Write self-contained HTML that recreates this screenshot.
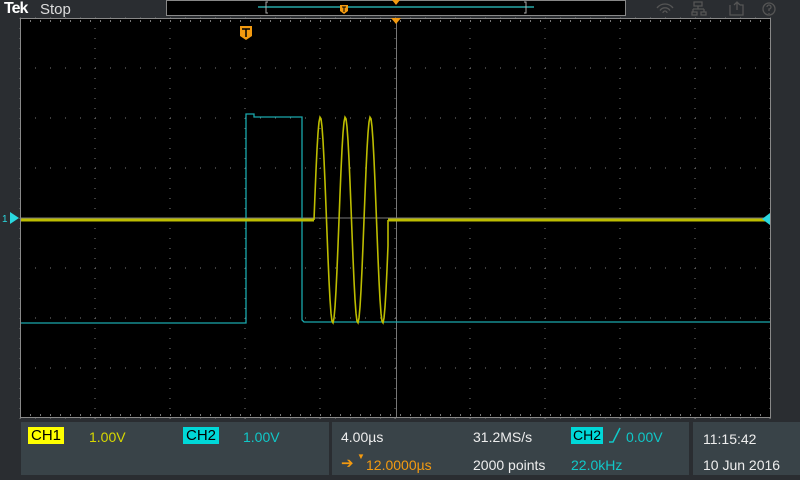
<!DOCTYPE html>
<html><head><meta charset="utf-8"><style>
body{margin:0;width:800px;height:480px;background:#2a2d31;overflow:hidden;font-family:"Liberation Sans",sans-serif;position:relative}
.t{position:absolute;white-space:nowrap;font-size:14px}
.p{position:absolute;background:#394348}
</style></head><body>
<div class="t" style="left:4px;top:0px;color:#fff;font-weight:bold;font-size:16px;letter-spacing:-1px">Tek</div>
<div class="t" style="left:40px;top:1px;color:#ddd;font-size:15px">Stop</div>
<svg width="800" height="480" style="position:absolute;left:0;top:0" id="s">
<rect x="166.5" y="0.5" width="459" height="15" fill="#000" stroke="#888"/>
<line x1="258" y1="7" x2="534" y2="7" stroke="#2cc8c8" stroke-width="1.2"/>
<path d="M268 2h-2v11h2M524 2h2v11h-2" fill="none" stroke="#aaa"/>
<path d="M340 5h8v6l-4 3l-4-3z" fill="#f39a10"/><path d="M342 7h4M344 7v5" stroke="#000"/>
<path d="M392 0h8l-4 5z" fill="#f39a10"/>
<rect x="20" y="18" width="751" height="400" fill="#000"/>
<g id="g"></g>
<line x1="396.5" y1="18" x2="396.5" y2="418" stroke="#777"/>
<line x1="20" y1="218" x2="771" y2="218" stroke="#777"/>
<path id="c2" fill="none" stroke="#19a8ac" stroke-width="1.3" d="M20 323H246V114H254V117H302V320L304 322H771"/>
<path id="c1" fill="none" stroke="#bdbd00" stroke-width="1.6"/>
<line x1="20" y1="220" x2="314" y2="220" stroke="#bdbd00" stroke-width="3"/>
<line x1="388" y1="220" x2="771" y2="220" stroke="#bdbd00" stroke-width="3"/>
<rect x="20.5" y="18.5" width="750" height="399" fill="none" stroke="#888"/>
<path d="M240 26h12v10l-6 4l-6-4z" fill="#f39a10"/><path d="M242 29h8M246 29v8" stroke="#000" stroke-width="1.5"/>
<path d="M391 18h10l-5 6z" fill="#f39a10"/>
<path d="M10 212l9 6l-9 6z" fill="#2ad8e0"/><text x="2" y="222" font-size="10" fill="#2ad8e0" font-family="Liberation Sans">1</text>
<path d="M770 213l-8 6l8 6z" fill="#2ad8e0"/>
<g fill="none" stroke="#555" stroke-width="1.3">
<path d="M657 8a10 10 0 0 1 16 0M660 10.5a6 6 0 0 1 10 0M663 13a2 2 0 0 1 4 0"/>
<path d="M694 2h8v4h-8zM698 6v3M693 9h11M693 9v3M704 9v3M692 12h5v3h-5zM701 12h5v3h-5z"/>
<path d="M730 5v10h13v-10h-3M737 10v-8M734 5l3-3l3 3"/>
<circle cx="769" cy="9" r="6"/><path d="M767 7a2 2 0 1 1 2 2v2M769 13v1"/>
</g>
</svg>
<div class="p" style="left:21px;top:422px;width:308px;height:53px"></div>
<div class="p" style="left:332px;top:422px;width:357px;height:53px"></div>
<div class="p" style="left:693px;top:422px;width:107px;height:53px"></div>
<div class="t" style="left:28px;top:427px;background:#ffff00;color:#000;padding:0 3px 0 3px;line-height:17px;font-size:15px">CH1</div>
<div class="t" style="left:89px;top:429px;color:#d8d800">1.00V</div>
<div class="t" style="left:183px;top:427px;background:#00d8d8;color:#000;padding:0 3px;line-height:17px;font-size:15px">CH2</div>
<div class="t" style="left:243px;top:429px;color:#10c8c8">1.00V</div>
<div class="t" style="left:341px;top:429px;color:#eee">4.00µs</div>
<div class="t" style="left:341px;top:454px;color:#f39a10;font-size:15px">➔</div>
<div class="t" style="left:357px;top:452px;color:#f39a10;font-size:8px">▼</div>
<div class="t" style="left:366px;top:457px;color:#f39a10">12.0000µs</div>
<div class="t" style="left:473px;top:429px;color:#eee">31.2MS/s</div>
<div class="t" style="left:473px;top:457px;color:#eee">2000 points</div>
<div class="t" style="left:571px;top:427px;background:#00d8d8;color:#000;padding:0 2px;line-height:17px">CH2</div>
<svg style="position:absolute;left:608px;top:426px" width="14" height="18"><path d="M1 16h4l7-14" fill="none" stroke="#10c8c8" stroke-width="1.5"/></svg>
<div class="t" style="left:626px;top:429px;color:#10c8c8">0.00V</div>
<div class="t" style="left:571px;top:457px;color:#10c8c8">22.0kHz</div>
<div class="t" style="left:703px;top:431px;color:#eee">11:15:42</div>
<div class="t" style="left:703px;top:457px;color:#eee">10 Jun 2016</div>
<script>
var g=document.getElementById('g'),h='';
for(var k=0;k<=10;k++){var x=20+75*k;for(var y=18;y<=418;y+=10)h+='<rect x="'+(x-0.5)+'" y="'+y+'" width="1" height="1" fill="#777"/>';}
for(var j=0;j<=8;j++){var y=18+50*j;for(var x=20;x<=771;x+=15)h+='<rect x="'+x+'" y="'+(y-0.5)+'" width="1" height="1" fill="#777"/>';}
for(var x=20;x<=771;x+=10){h+='<rect x="'+x+'" y="20" width="1" height="2" fill="#777"/><rect x="'+x+'" y="414" width="1" height="2" fill="#777"/>';}
g.innerHTML=h;
var d='M314 220';for(var x=314;x<=388;x+=1){d+='L'+x+' '+(220-103*Math.sin((x-314)/25*2*Math.PI)).toFixed(1);}
d+='L388 220';document.getElementById('c1').setAttribute('d',d);
</script>
</body></html>
